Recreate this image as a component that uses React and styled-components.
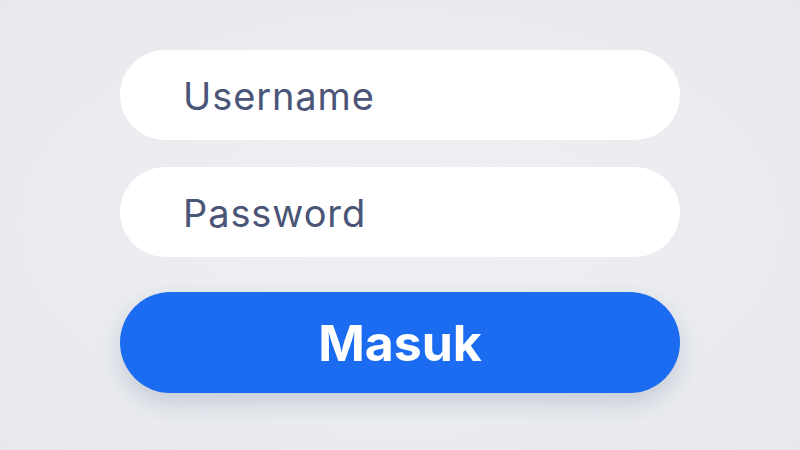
import styled, { createGlobalStyle } from "styled-components";

const Global = createGlobalStyle`
  html, body { margin: 0; padding: 0; }
  body {
    width: 800px;
    height: 450px;
    background: #eaebef;
    font-family: Inter, "Noto Sans", sans-serif;
    overflow: hidden;
  }
`;

const Page = styled.div`
  width: 800px;
  height: 450px;
  box-sizing: border-box;
  padding-top: 50px;
  display: flex;
  flex-direction: column;
  align-items: center;
  background: radial-gradient(ellipse at center, #eef0f3 0%, #e7e9ed 100%);
`;

const Form = styled.form`
  width: 560px;
  display: flex;
  flex-direction: column;
`;

const Field = styled.div`
  height: 90px;
  border-radius: 45px;
  background: #ffffff;
  display: flex;
  align-items: center;
  padding-left: 63px;
  padding-top: 2px;
  box-sizing: border-box;
  margin-bottom: ${({ gap }) => gap}px;
  font-size: 38px;
  font-weight: 400;
  color: #4a5577;
  letter-spacing: 0.9px;
`;

const Button = styled.button`
  height: 101px;
  border: none;
  border-radius: 51px;
  background: #1b6cf0;
  color: #ffffff;
  font-family: Inter, "Noto Sans", sans-serif;
  font-weight: 700;
  font-size: 50px;
  box-shadow: 0 10px 22px rgba(40, 60, 110, 0.18);
  display: flex;
  align-items: center;
  justify-content: center;
`;

export default function App() {
  return (
    <>
      <Global />
      <Page>
        <Form>
          <Field gap={27}>Username</Field>
          <Field gap={35}>Password</Field>
          <Button type="button">Masuk</Button>
        </Form>
      </Page>
    </>
  );
}
